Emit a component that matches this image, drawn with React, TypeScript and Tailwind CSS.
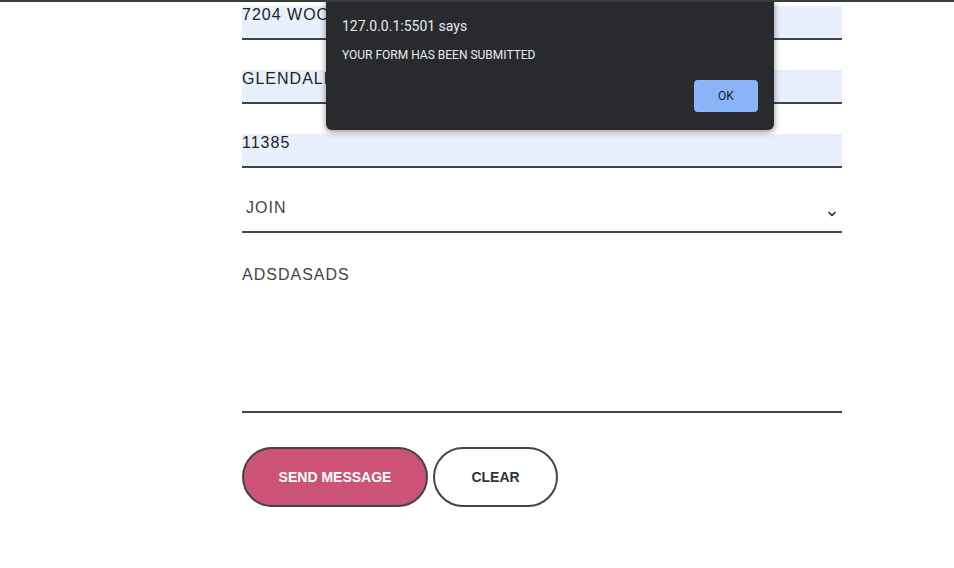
import { ChevronDown } from "lucide-react";

const fields = ["7204 WOODHAVEN BLVD", "GLENDALE", "11385"];

function Field({ value }: { value: string }) {
  return (
    <div className="h-[34px] bg-[#e8f0fe] border-b-2 border-[#444] text-[16px] leading-[18px] tracking-[1px] text-[#222] whitespace-nowrap overflow-hidden">
      {value}
    </div>
  );
}

function AlertDialog() {
  return (
    <div className="absolute left-[326px] top-[-2px] w-[448px] h-[130px] bg-[#292a2d] rounded-b-[6px] shadow-[0_2px_6px_rgba(0,0,0,0.45)] px-4 pt-[17px] font-['Roboto',sans-serif]">
      <div className="text-[14px] leading-[18px] text-[#e8eaed]">127.0.0.1:5501 says</div>
      <div className="mt-[12px] text-[12px] leading-[16px] text-[#e8eaed]">YOUR FORM HAS BEEN SUBMITTED</div>
      <div className="flex justify-end mt-[17px]">
        <button className="w-[64px] h-[32px] rounded-[4px] bg-[#8ab4f8] text-[12px] text-[#202124]">OK</button>
      </div>
    </div>
  );
}

export default function App() {
  return (
    <div className="relative w-[954px] h-[568px] overflow-hidden bg-white border-t-2 border-[#3c3c3c] font-['Liberation_Sans',Arial,sans-serif]">
      <div className="pl-[242px] pt-[4px] w-[842px]">
        <div className="flex flex-col gap-[30px]">
          {fields.map((f) => (
            <Field key={f} value={f} />
          ))}
          <div className="relative h-[35px] border-b-2 border-[#444] pl-[4px] pt-[1px] text-[16px] leading-[18px] tracking-[1px] text-[#444]">
            JOIN
            <ChevronDown size={12} strokeWidth={3.5} className="absolute right-[4px] top-[10px] text-[#333]" />
          </div>
          <div className="h-[150px] border-b-2 border-[#444] pt-[3px] text-[16px] leading-[18px] tracking-[1px] text-[#444]">
            ADSDASADS
          </div>
        </div>
        <div className="flex gap-[5px] mt-[34px]">
          <button className="w-[186px] h-[60px] rounded-full border-2 border-[#444] bg-[#cc5377] text-white text-[14px] font-bold">
            SEND MESSAGE
          </button>
          <button className="w-[125px] h-[60px] rounded-full border-2 border-[#444] bg-white text-[#333] text-[14px] font-bold">
            CLEAR
          </button>
        </div>
      </div>
      <AlertDialog />
    </div>
  );
}
